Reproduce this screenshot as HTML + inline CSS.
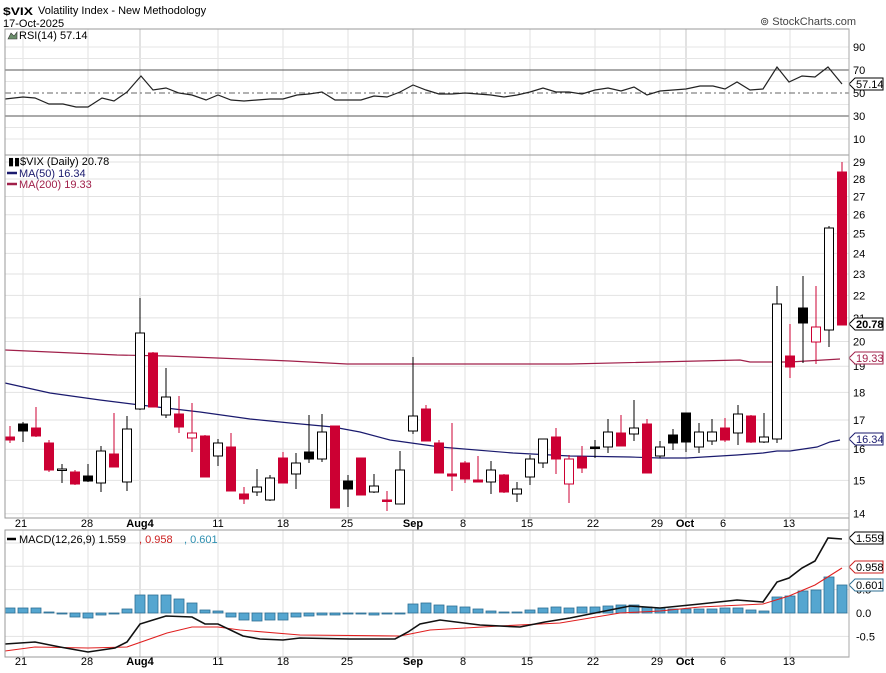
<!DOCTYPE html>
<html><head><meta charset="utf-8"><style>
body{margin:0;background:#fff;width:886px;height:673px;overflow:hidden;font-family:"Liberation Sans",sans-serif}
svg{position:absolute;left:0;top:0}
text{font-family:"Liberation Sans",sans-serif;font-size:11px}
</style></head><body>
<svg id="s" width="886" height="673" xmlns="http://www.w3.org/2000/svg"></svg>
<script>
const S=document.getElementById('s');let h='';
const L=(x1,y1,x2,y2,c,w,extra)=>h+=`<line x1="${x1}" y1="${y1}" x2="${x2}" y2="${y2}" stroke="${c}" stroke-width="${w||1}" ${extra||''}/>`;
const T=(x,y,t,c,sz,extra)=>h+=`<text x="${x}" y="${y}" fill="${c||'#000'}" font-size="${sz||11}" ${extra||''}>${t}</text>`;
const P=(pts,c,w)=>h+=`<polyline fill="none" stroke="${c}" stroke-width="${w||1.3}" points="${pts.map(p=>p.join(',')).join(' ')}"/>`;
// header
T(3,15,'$VIX','#000',17,'font-weight="bold" textLength="30" lengthAdjust="spacingAndGlyphs"');T(38,14,'Volatility Index - New Methodology','#000',12);
T(3,27,'17-Oct-2025','#000',11);
T(760,25,'⊚ StockCharts.com','#444',11);
// vertical grids
const vg=[[23,0],[88,0],[140,1],[218,0],[283,0],[348,0],[413,1],[465,0],[530,0],[595,0],[660,0],[686,1],[725,0],[790,0]];
const panels=[[29,155],[155,518],[530,657]];
panels.forEach(p=>vg.forEach(v=>L(v[0],p[0],v[0],p[1],v[1]?'#c4c4c4':'#e2e2e2',1)));
// RSI
const ry=v=>93-1.15*(v-50);
[90,80,60,40,20,10].forEach(v=>L(5,ry(v),849,ry(v),'#e6e6e6'));
L(5,ry(70),849,ry(70),'#555');L(5,ry(30),849,ry(30),'#555');
L(5,ry(50),849,ry(50),'#666',1,'stroke-dasharray="6,3,2,3"');
[[90,'90'],[70,'70'],[50,'50'],[30,'30'],[10,'10']].forEach(a=>T(853,ry(a[0])+4,a[1],'#000',11));
P([[5,99],[23,97],[35,98],[49,104],[63,104],[76,107],[88,107],[102,98],[114,101],[127,92],[141,76],[153,90],[166,88],[179,93],[192,95],[206,100],[218,95],[231,100],[244,101],[257,100],[270,99],[283,99],[297,95],[309,94],[322,92],[335,100],[348,100],[361,100],[374,96],[387,97],[400,92],[413,85],[426,90],[439,94],[452,94],[465,93],[478,94],[491,95],[504,97],[517,95],[530,92],[543,88],[556,92],[569,92],[582,94],[595,90],[608,88],[621,91],[634,87],[647,95],[660,91],[673,90],[686,89],[700,86],[713,86],[725,89],[737,82],[750,90],[763,89],[777,67],[789,82],[802,76],[815,77],[828,67],[842,84]],'#222',1.2);
h+=`<path d="M849 84 L855 78 H883 V90 H855 Z" fill="#fff" stroke="#000"/>`;T(856,88,'57.14','#000',11);
h+=`<path d="M8 39 L11 33 L14 36 L17 32 V39 Z" fill="#6b8f6b" stroke="#333" stroke-width=".6"/>`;
T(19,39,'RSI(14) 57.14','#000',12);
// Price
const py=p=>162+483*(Math.log(29)-Math.log(p));
for(let p=14;p<=29;p++){L(5,py(p),849,py(p),'#e2e2e2');T(853,py(p)+4,p,'#000',11);}
P([[5,383],[50,393],[100,400],[140,405],[200,412],[250,419],[290,423],[333,427],[360,432],[390,440],[440,447],[513,453],[570,456],[630,457],[660,458],[687,458],[737,455],[763,453],[777,451],[790,451],[817,447],[830,442],[840,440]],'#1a1a6e',1.2);
P([[5,350],[50,352],[117,355],[167,356],[217,358],[290,361],[347,364],[413,364],[570,364],[740,360],[750,362],[790,362],[840,359]],'#a0204a',1.2);
const C=[[426,443,437,440,'r'],[422,442,424,431,'b'],[407,437,428,436,'r'],[440,472,443,470,'r'],[464,483,469,470,'h'],[470,485,472,484,'r'],[464,482,476,481,'b'],[446,492,451,483,'h'],[413,467,454,467,'r'],[416,491,429,482,'h'],[298,410,333,409,'h'],[352,407,353,407,'r'],[368,418,397,415,'h'],[396,433,414,427,'r'],[403,452,433,438,'rh'],[435,477,436,477,'r'],[439,466,443,456,'h'],[433,491,447,491,'r'],[487,504,494,499,'r'],[469,496,487,492,'h'],[475,501,478,500,'h'],[452,483,458,483,'r'],[453,489,463,474,'h'],[415,463,452,459,'b'],[414,462,432,459,'h'],[426,508,426,508,'r'],[475,507,481,489,'b'],[458,495,458,495,'r'],[474,493,486,492,'h'],[491,511,500,501,'r'],[451,504,470,504,'h'],[357,434,416,431,'h'],[405,441,409,441,'r'],[440,473,443,473,'r'],[423,491,474,476,'r'],[461,483,463,479,'r'],[456,482,480,482,'r'],[461,494,470,482,'h'],[474,493,475,492,'r'],[482,502,489,494,'h'],[455,485,459,477,'h'],[439,468,439,463,'h'],[428,474,437,459,'r'],[455,503,459,484,'rh'],[446,473,457,468,'r'],[440,458,447,448,'b'],[419,453,432,447,'h'],[415,446,433,446,'r'],[400,441,428,434,'h'],[419,473,424,473,'r'],[441,458,447,456,'h'],[429,450,435,443,'b'],[413,452,413,442,'b'],[423,453,432,447,'h'],[419,445,432,441,'h'],[418,442,428,440,'r'],[405,445,414,433,'h'],[415,443,416,442,'r'],[413,443,437,442,'h'],[286,443,304,439,'h'],[324,378,356,367,'r'],[276,363,308,323,'b'],[286,364,327,342,'rh'],[226,347,228,330,'h'],[162,325,172,325,'r']];
C.forEach((c,i)=>{const x=10+13*i;const red=c[4][0]=='r';const col=red?'#cc0033':'#000';
L(x,c[0],x,c[1],col,1);let bh=Math.max(c[3]-c[2],1.5);
let fill=c[4]=='r'?'#cc0033':c[4]=='b'?'#000':'#fff';
h+=`<rect x="${x-4.5}" y="${c[2]}" width="9" height="${bh}" fill="${fill}" stroke="${col}" stroke-width="1"/>`;});
h+=`<path d="M849 324 L855 318 H883 V330 H855 Z" fill="#fff" stroke="#000"/>`;T(856,328,'20.78','#000',11,'font-weight="bold"');
h+=`<path d="M849 358 L855 352 H883 V364 H855 Z" fill="#fff" stroke="#a0204a"/>`;T(856,362,'19.33','#a0204a',11);
h+=`<path d="M849 439 L855 433 H883 V445 H855 Z" fill="#fff" stroke="#1a1a6e"/>`;T(856,443,'16.34','#1a1a6e',11);
T(8,165,'▮▮','#000',7);T(20,165,'$VIX (Daily) 20.78','#000',12);
L(7,173,17,173,'#1a1a6e',2.5);T(19,177,'MA(50) 16.34','#1a1a6e',11);
L(7,184,17,184,'#a0204a',2.5);T(19,188,'MA(200) 19.33','#a0204a',11);
// MACD
const my=v=>613-46.7*v;
[1.5,1.0,0.5,0,-0.5].forEach(v=>L(5,my(v),849,my(v),'#e2e2e2'));
[[0.5,'0.5'],[0,'0.0'],[-0.5,'-0.5']].forEach(a=>T(856,my(a[0])+4,a[1],'#000',11));
const B=[608,608,608,612,614,617,618,615,614,609,595,595,595,599,603,610,611,617,620,621,620,620,617,616,615,615,614,614,615,614,613,604,603,605,606,607,609,611,612,612,610,608,607,608,607,607,606,605,605,607,608,609,609,609,609,608,608,610,611,597,596,591,590,577,585];
B.forEach((b,i)=>{const x=10+13*i;const t=Math.min(b,613),hh=Math.abs(b-613)||1;h+=`<rect x="${x-5}" y="${t}" width="10" height="${hh}" fill="#55a6d0" stroke="#2d6f93" stroke-width=".8"/>`;});
P([[5,651],[35,647],[88,648],[127,647],[167,633],[192,627],[218,627],[240,630],[300,635],[400,636],[430,630],[500,626],[560,623],[620,613],[660,611],[700,607],[763,604],[789,596],[815,585],[842,568]],'#e02020',1.1);
P([[5,644],[35,642],[60,647],[88,652],[115,648],[127,642],[140,624],[153,620],[166,616],[192,617],[205,624],[218,624],[243,636],[260,639],[283,640],[300,638],[350,639],[395,639],[408,632],[420,624],[440,620],[480,625],[520,627],[545,622],[570,618],[600,612],[630,606],[660,608],[700,604],[737,600],[763,602],[777,582],[789,578],[802,568],[815,561],[828,538],[842,539]],'#111',1.6);
h+=`<path d="M849 538 L855 532 H883 V544 H855 Z" fill="#fff" stroke="#000"/>`;T(856,542,'1.559','#000',11);
h+=`<path d="M849 567 L855 561 H883 V573 H855 Z" fill="#fff" stroke="#cc2020"/>`;T(856,571,'0.958','#000',11);
h+=`<path d="M849 585 L855 579 H883 V591 H855 Z" fill="#fff" stroke="#2d6f93"/>`;T(856,589,'0.601','#000',11);
L(7,539,16,539,'#000',2.5);T(19,543,'MACD(12,26,9) 1.559','#000',11);T(139,543,', 0.958','#cc2020',11);T(184,543,', 0.601','#2d8fb0',11);
// frames
panels.forEach(p=>h+=`<rect x="5" y="${p[0]}" width="844" height="${p[1]-p[0]}" fill="none" stroke="#999"/>`);
L(849,29,849,657,'#aaa');
// date labels
const D=[[21,'21'],[87,'28'],[140,'Aug4'],[218,'11'],[283,'18'],[347,'25'],[413,'Sep'],[463,'8'],[527,'15'],[593,'22'],[657,'29'],[685,'Oct'],[723,'6'],[789,'13']];
[527,665].forEach(y=>D.forEach(d=>{const b=/[A-Z]/.test(d[1]);T(d[0],y,d[1],'#000',11,`text-anchor="middle"${b?' font-weight="bold"':''}`);}));
S.innerHTML=h;
</script></body></html>
